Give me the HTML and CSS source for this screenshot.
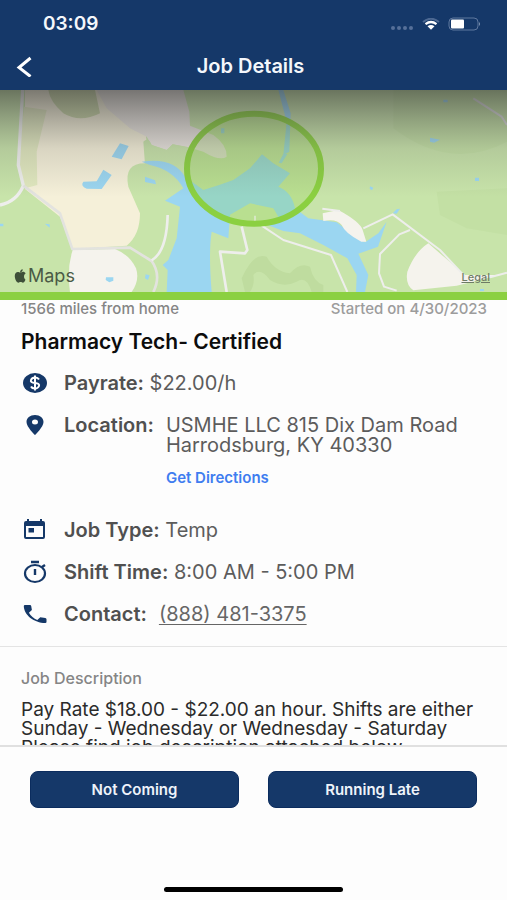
FILE: index.html
```html
<!DOCTYPE html>
<html lang="en">
<head>
    <meta charset="UTF-8">
    <meta name="viewport" content="width=device-width, initial-scale=1.0">
    <title>Job Details</title>
    <link rel="stylesheet" href="styles.css">
</head>
<body>
    <header class="header">
        <div class="status-bar">
            <span class="time">03:09</span>
            <div class="status-icons">
                <svg width="24" height="14" viewBox="0 0 24 14" fill="#567099">
                    <circle cx="3" cy="11" r="2"/><circle cx="9" cy="11" r="2"/><circle cx="15" cy="11" r="2"/><circle cx="21" cy="11" r="2"/>
                </svg>
                <svg width="18" height="12" viewBox="0 0 18 12" fill="none">
                    <path d="M1 4Q9-2.500 17 4" stroke="#4c6892" stroke-width="2"/>
                    <path d="M3.500 6.200Q9 1.800 14.500 6.200" stroke="#fff" stroke-width="2.200"/>
                    <path d="M5.500 8.300Q9 5.600 12.500 8.300L9 11.800Z" fill="#fff"/>
                </svg>
                <svg width="33" height="14" viewBox="0 0 33 14" fill="none">
                    <rect x="1" y="1" width="29" height="12" rx="4" stroke="#5f789f"/>
                    <rect x="3" y="2.500" width="13" height="9" rx="1" fill="#fff"/>
                    <path d="M31 5Q33 7 31 9Z" fill="#7f94b3"/>
                </svg>
            </div>
        </div>
        <div class="nav">
            <button class="back" aria-label="Back">
                <svg width="16" height="22" viewBox="0 0 16 22" fill="none" stroke="#fff" stroke-width="3">
                    <path d="M14.500 3L3 12.500l11.500 9"/>
                </svg>
            </button>
            <h1>Job Details</h1>
        </div>
    </header>

    <div class="map">
        <svg class="map-drawing" viewBox="0 15 1521 606" preserveAspectRatio="xMidYMid slice">
            <defs>
                <linearGradient id="shade" x1="0" y1="0" x2="0" y2="1">
                    <stop offset="0" stop-color="#303030" stop-opacity=".62"/>
                    <stop offset=".25" stop-color="#404040" stop-opacity=".42"/>
                    <stop offset=".55" stop-color="#505050" stop-opacity=".17"/>
                    <stop offset="1" stop-color="#505050" stop-opacity="0"/>
                </linearGradient>
            </defs>
            <rect y="15" width="1521" height="606" fill="#c8e4aa"/>
            <!-- woods -->
            <g fill="#c3e0a4">
                <path d="M1310 320L1521 310V450L1400 430L1320 390Z"/>
                <path d="M1180 15H1521V170Q1350 260 1180 130Z"/>
                <path fill="#bfdc9f" d="M735 621L725 580Q760 500 800 515Q825 560 870 565Q900 530 930 545Q940 590 970 600V621H935Q920 570 890 590Q850 610 810 585Q780 545 760 570Q765 600 750 621Z"/>
            </g>
            <!-- open ground -->
            <path fill="#f5f0d9" d="M75 15H420L440 170L435 235Q370 235 385 305L420 385Q420 450 380 482L218 492L180 395L75 312Z"/>
            <path fill="#e1e8bf" d="M72 65L140 75L110 200L112 300L75 310L55 240Z"/>
            <path fill="#e9e4de" d="M290 15H550L568 80L570 122L640 150Q682 180 680 215Q660 230 610 200L560 185L518 178L500 195L455 180L440 155L390 130L320 70Z"/>
            <path fill="#cad6a7" d="M145 15H285L300 85Q240 115 190 85Q150 50 145 15Z"/>
            <path fill="#c8e4aa" d="M430 170Q445 155 455 180L500 195L518 178L570 188L590 240L435 238Z"/>
            <path fill="#f5f3ed" d="M218 495L345 492Q390 510 408 550Q420 585 395 621H210Q200 550 218 495Z"/>
            <!-- water -->
            <g fill="#9bd6f1">
                <path d="M425 230Q520 215 555 275L610 315Q660 300 700 285L750 250L786 208L820 235L870 265L835 305Q875 320 885 370L925 400L1010 412L1060 450L1095 472L1135 445L1160 410L1134 485L1075 506L1105 570L1095 621H1068L1070 570L1042 520L970 480L900 445L850 438L750 400L690 390L685 460L635 440Q625 500 635 621H500L503 555L488 540L505 525L530 460L540 365L495 347L550 310Q520 255 450 240Z"/>
                <path d="M835 15H850L872 85L868 200L850 210L860 110Z"/>
                <path d="M862 207L845 235L836 233L850 207Z"/>
                <path d="M360 175L386 183L365 223L335 215Z"/>
                <path d="M310 254L335 270L305 312L260 311Q240 302 250 290L290 289Z"/>
                <path d="M435 275L465 286L468 298L435 291Z"/>
                <path d="M318 577h22v10l-12 5-11-7ZM437 568l12 3-5 14-9-5ZM0 416h10v8H0ZM135 416l14 2v10ZM663 130h10v15h-10ZM1110 304l10 4-4 8-7-5ZM1290 158l30 6-18 9-12-3ZM1330 44h13v8h-13ZM1425 278h12v10h-12ZM1178 385l12-12 10-2-10 15ZM1440 612h12v6h-12Z"/>
            </g>
            <path fill="#c8e4aa" d="M690 389L750 355L820 370L835 395L800 410L700 405Z"/>
            <path fill="#f5f3ed" d="M968 385L1015 375Q1080 410 1088 435L1099 470L1084 470Q1035 445 1025 420Q1010 400 970 408Z"/>
            <path fill="#f5f3ed" d="M1285 475L1395 570L1500 570L1370 602L1240 616Q1215 600 1222 560Q1245 500 1285 475Z"/>
            <!-- roads -->
            <g fill="none" stroke="#eeeeec" stroke-width="8" stroke-linejoin="round">
                <path stroke-width="10" d="M68 15L55 240L70 302Q50 350 0 360"/>
                <path stroke="#e3e3df" d="M70 302L180 385L217 492L390 488L455 528Q485 570 460 621"/>
                <path d="M503 390Q500 500 455 526M725 425L742 495L735 505L660 500L680 621"/>
                <path stroke-width="6" d="M785 422L850 465L993 510L1042 621M765 392V410M967 371L1020 378M1090 430L1178 388L1320 495L1395 575M1230 435L1198 448L1140 507L1137 565L1152 605L1190 617M1470 577L1521 563"/>
                <path stroke-width="6" stroke="#dcdcdc" d="M1420 40L1505 95L1521 120"/>
            </g>
            <ellipse cx="762" cy="251" rx="201" ry="165" fill="#8bd23f" fill-opacity=".24" stroke="#8bd041" stroke-width="18"/>
            <rect y="15" width="1521" height="320" fill="url(#shade)"/>
        </svg>
        <span class="map-brand">
            <svg width="13" height="14" viewBox="0 0 170 170" preserveAspectRatio="none" fill="#3e4f39">
                <path d="M150 130c-10 22-22 36-34 36-11 0-15-7-29-7s-18 7-29 7C35 166 10 119 10 84c0-32 20-49 40-49 13 0 24 9 32 9s21-10 36-10c14 0 27 8 35 19-31 18-26 64-3 77ZM114 4c2 19-14 38-34 38C77 22 94 5 114 4Z"/>
            </svg>
            Maps
        </span>
        <a class="legal" href="#">Legal</a>
    </div>

    <main class="content">
        <div class="meta">
            <span>1566 miles from home</span>
            <span class="started">Started on 4/30/2023</span>
        </div>
        <h2>Pharmacy Tech- Certified</h2>

        <div class="row">
            <svg class="icon" viewBox="0 0 28 24">
                <ellipse cx="14" cy="12" rx="12" ry="10" fill="#153868"/>
                <path d="M18 8.500Q17 6.500 14 6.500T10 9t4 3 4 3-4 2.500-4-2M14 4.500v15" fill="none" stroke="#fff" stroke-width="2"/>
            </svg>
            <p><b>Payrate:</b> $22.00/h</p>
        </div>
        <div class="row">
            <svg class="icon" viewBox="0 0 28 24">
                <path d="M14 2C9 2 5.500 5 5.500 9c0 5 8.500 13 8.500 13s8.500-8 8.500-13c0-4-3.500-7-8.500-7Zm0 9.500a3 2.500 0 1 1 0-5 3 2.500 0 1 1 0 5Z" fill="#153868"/>
            </svg>
            <b>Location:</b>
            <div class="address">
                <p>USMHE LLC 815 Dix Dam Road Harrodsburg, KY 40330</p>
                <a class="directions" href="#">Get Directions</a>
            </div>
        </div>
        <div class="row">
            <svg class="icon" viewBox="0 0 28 24">
                <path d="M5 3h1V1h2v2h11V1h2v2h1q2 0 2 2v14q0 2-2 2H5q-2 0-2-2V5q0-2 2-2Zm0 5v11h17V8ZM7.500 10h5.500v4.500H7.500Z" fill="#153868" fill-rule="evenodd"/>
            </svg>
            <p><b>Job Type:</b> Temp</p>
        </div>
        <div class="row">
            <svg class="icon" viewBox="0 0 28 24" fill="none" stroke="#153868">
                <ellipse cx="14" cy="13.500" rx="10" ry="8.500" stroke-width="2.200"/>
                <path d="M10 2h8M14 9v6M21 7l3-2" stroke-width="2.400"/>
            </svg>
            <p><b>Shift Time:</b> 8:00 AM - 5:00 PM</p>
        </div>
        <div class="row">
            <svg class="icon" viewBox="0 0 28 24">
                <path d="M4 3h5q1 0 1.200 1l.7 4-3 2.700q3 5 8.400 7.300l3-2.800 5 .8q1.200.2 1.200 1.200V20q0 1-1.200 1C13 21 3 13 2.800 4Q2.800 3 4 3Z" fill="#153868"/>
            </svg>
            <b>Contact:</b>
            <a class="phone" href="tel:8884813375">(888) 481-3375</a>
        </div>

        <section class="description">
            <h3>Job Description</h3>
            <p>Pay Rate $18.00 - $22.00 an hour. Shifts are either Sunday - Wednesday or Wednesday - Saturday<br>Please find job description attached below</p>
        </section>
    </main>

    <footer class="footer">
        <div class="buttons">
            <button class="action">Not Coming</button>
            <button class="action">Running Late</button>
        </div>
        <div class="home-bar"></div>
    </footer>
</body>
</html>
```
FILE: styles.css
```css
* {
    box-sizing: border-box;
}

body {
    font-family: Inter, "Liberation Sans", sans-serif;
    font-size: 20px;
    line-height: 20px;
    color: #5c5c5c;
    background-color: #fdfdfd;
    display: flex;
    flex-direction: column;
    height: 100vh;
    margin: 0;
    overflow: hidden;
}

h1, h2, h3, p {
    margin: 0;
}

b {
    font-weight: 600;
    color: #505050;
}

.header {
    flex: none;
    background-color: #153869;
    color: #f4f7fb;
}

.status-bar {
    display: flex;
    justify-content: space-between;
    align-items: center;
    height: 48px;
    padding: 0 26px 0 43px;
}

.time {
    font-size: 19px;
    font-weight: 600;
}

.status-icons {
    display: flex;
    align-items: center;
    gap: 8px;
}

.nav {
    display: grid;
    grid-template-columns: 1fr auto 1fr;
    align-items: center;
    height: 42px;
    padding: 0 22px 6px 16px;
}

.nav h1 {
    grid-column: 2;
    font-size: 20px;
    font-weight: 600;
}

.back {
    display: flex;
    justify-self: start;
    padding: 0;
    border: none;
    background: none;
    cursor: pointer;
}

.map {
    flex: none;
    position: relative;
    height: 210px;
    border-bottom: 8px solid #8bd041;
}

.map-drawing {
    display: block;
    width: 100%;
    height: 100%;
}

.map-brand {
    position: absolute;
    left: 14px;
    bottom: 6px;
    display: flex;
    align-items: center;
    gap: 1px;
    font-size: 18px;
    color: #4a5a45;
}

.legal {
    position: absolute;
    right: 17px;
    bottom: 5px;
    font-size: 11px;
    font-weight: 500;
    color: #6e7c65;
}

.content {
    flex: 1;
    min-height: 0;
    overflow: hidden;
}

.meta {
    display: flex;
    justify-content: space-between;
    padding: 0 20px 0 21px;
    font-size: 15px;
    font-weight: 500;
    line-height: 18px;
    color: #858585;
}

.started {
    color: #9c9c9c;
}

.content h2 {
    padding: 12px 21px;
    font-size: 21px;
    font-weight: 600;
    line-height: 24px;
    color: #0c0c0c;
}

.row {
    display: flex;
    align-items: flex-start;
    margin: 7px 21px 22px;
}

.icon {
    flex: none;
    width: 28px;
    height: 24px;
    margin: -2px 15px -2px 0;
}

.address {
    max-width: 300px;
    margin-left: 12px;
}

.directions {
    display: block;
    margin: 13px 0 10px;
    font-size: 15px;
    font-weight: 600;
    color: #3f7df0;
    text-decoration: none;
}

.phone {
    margin-left: 12px;
    color: #666;
    text-decoration-thickness: 1px;
    text-underline-offset: 3px;
}

.description {
    padding: 21px 21px 0;
    border-top: 1px solid #e4e4e4;
}

.description h3 {
    margin-bottom: 12px;
    font-size: 16px;
    font-weight: 500;
    color: #858585;
}

.description p {
    font-size: 19px;
    line-height: 19px;
    color: #2b2b2b;
}

.footer {
    flex: none;
    display: flex;
    flex-direction: column;
    justify-content: space-between;
    align-items: center;
    height: 155px;
    padding: 24px 30px 8px;
    border-top: 2px solid #e0e0e0;
}

.buttons {
    display: flex;
    gap: 29px;
    width: 100%;
}

.action {
    flex: 1;
    height: 37px;
    border: 1px solid #0b2c5e;
    border-radius: 8px;
    background-color: #153869;
    color: #eef3fa;
    font-family: inherit;
    font-size: 15px;
    font-weight: 600;
    cursor: pointer;
}

.home-bar {
    width: 40%;
    height: 5px;
    border-radius: 3px;
    background-color: #000;
}
```
